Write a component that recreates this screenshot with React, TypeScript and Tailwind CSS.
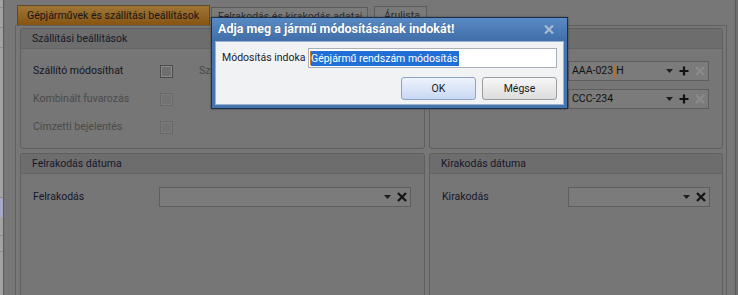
import React from 'react'

const font = "font-['Roboto','Liberation_Sans',sans-serif]"

function Caret() {
  return (
    <svg width="7" height="4" viewBox="0 0 7 4">
      <path d="M0 0H7L3.5 4Z" fill="#1e1e1e" />
    </svg>
  )
}

function Plus() {
  return (
    <svg width="10" height="10" viewBox="0 0 10 10">
      <path d="M5 0.5V9.5M0.5 5H9.5" stroke="#111" strokeWidth="2.2" />
    </svg>
  )
}

function Cross({ color = '#151515' }: { color?: string }) {
  return (
    <svg width="10" height="10" viewBox="0 0 10 10">
      <path d="M1 1L9 9M9 1L1 9" stroke={color} strokeWidth="2.3" />
    </svg>
  )
}

function Checkbox({ enabled }: { enabled?: boolean }) {
  return (
    <div
      className={
        'w-[13px] h-[13px] shrink-0 border ' +
        (enabled ? 'border-[#4a4a4a] bg-[#6f6f6f]' : 'border-[#686868] bg-[#737373]')
      }
    >
      <div className={'w-full h-full border ' + (enabled ? 'border-[#8a8a8a]' : 'border-[#7c7c7c]')} />
    </div>
  )
}

function Panel({ title, children, className = '' }: { title: string; children?: React.ReactNode; className?: string }) {
  return (
    <div className={'rounded-[3px] border border-[#5f5f5f] bg-[#767676] flex flex-col ' + className}>
      <div className="h-[20px] shrink-0 bg-[#6d6d6d] border-b border-[#646464] rounded-t-[3px] pl-[11px] flex items-center text-[10.5px] text-[#16172a]">
        {title}
      </div>
      {children}
    </div>
  )
}

function Field({ children, width, plus, crossColor }: { children?: React.ReactNode; width: string; plus?: boolean; crossColor?: string }) {
  return (
    <div className={'h-[20px] shrink-0 border border-[#5e5e5e] bg-[#7b7b7b] flex items-center pl-[3px] pr-[3px] ' + width}>
      <div className="flex-1 text-[10.5px] text-[#111111] flex items-center">{children}</div>
      <div className="flex items-center gap-[6px]">
        <Caret />
        {plus && <Plus />}
        <Cross color={crossColor} />
      </div>
    </div>
  )
}

export default function App() {
  return (
    <div className={'relative w-[738px] h-[295px] overflow-hidden bg-[#777777] flex whitespace-nowrap text-[10.5px] ' + font}>
      {/* page behind the window */}
      <div className="w-[4px] h-full bg-[#a3a3a3] border-r border-[#595959] flex flex-col">
        <div className="h-[8px] border-b border-[#8d8d8d]" />
        <div className="h-[20px] border-b border-[#8d8d8d]" />
        <div className="h-[20px] border-b border-[#8d8d8d]" />
        <div className="h-[150px] border-b border-[#8d8d8d]" />
        <div className="h-[19px] bg-[#a6a8c8]" />
        <div className="h-[19px] border-b border-[#8d8d8d]" />
        <div className="h-[16px] border-b border-[#8d8d8d]" />
      </div>
      <div className="w-[11px]" />

      {/* window */}
      <div className="w-[712px] flex flex-col">
        <div className="h-[25px] flex items-end pl-[2px] text-[10.5px]">
          <div className="w-[193px] h-[20px] border border-b-0 border-[#5a4a30] bg-gradient-to-b from-[#9e7636] to-[#87540f] pl-[9px] flex items-center text-[#161616] overflow-hidden">
            Gépjárművek és szállítási beállítások
          </div>
          <div className="ml-[1px] w-[157px] h-[18px] border border-b-0 border-[#5b5b5b] bg-[#7a7a7a] pl-[6px] flex items-center text-[#2a2a2a] overflow-hidden">
            Felrakodás és kirakodás adatai
          </div>
          <div className="ml-[6px] w-[53px] h-[19px] border border-b-0 border-[#5b5b5b] bg-[#7a7a7a] pl-[9px] flex items-center text-[#2a2a2a] overflow-hidden">
            Árulista
          </div>
        </div>

        <div className="flex-1 border border-b-0 border-[#616161] pt-[2px] pl-[4px] pr-[3px] grid grid-cols-[405px_294px] grid-rows-[121px_1fr] gap-[4px]">
          <Panel title="Szállítási beállítások">
            <div className="pt-[8px] pl-[12px] flex flex-col text-[10.5px]">
              <div className="h-[28px] flex items-center">
                <span className="w-[127px] text-[#141522]">Szállító módosíthat</span>
                <Checkbox enabled />
                <span className="ml-[26px] text-[#474747]">Szállítás</span>
              </div>
              <div className="h-[28px] flex items-center">
                <span className="w-[127px] text-[#4a4a4a]">Kombinált fuvarozás</span>
                <Checkbox />
              </div>
              <div className="h-[28px] flex items-center">
                <span className="w-[127px] text-[#4a4a4a]">Címzetti bejelentés</span>
                <Checkbox />
              </div>
            </div>
          </Panel>

          <Panel title="Jármű adatok">
            <div className="pt-[12px] pl-[12px] pr-[13px] flex flex-col gap-[8px]">
              <div className="flex items-center justify-between text-[10.5px] text-[#141522]">
                <span>Vontató</span>
                <Field width="w-[141px]" plus crossColor="#8b8b8b">
                  AAA-023<span className="inline-block w-[1px] h-[13px] bg-[#c0701a] mx-[1px]" />H
                </Field>
              </div>
              <div className="flex items-center justify-between text-[10.5px] text-[#141522]">
                <span>Pótkocsi</span>
                <Field width="w-[141px]" plus crossColor="#8b8b8b">
                  CCC-234
                </Field>
              </div>
            </div>
          </Panel>

          <Panel title="Felrakodás dátuma" className="rounded-b-none border-b-0">
            <div className="pt-[13px] pl-[12px] flex items-center text-[10.5px] text-[#16172a]">
              <span className="w-[126px]">Felrakodás</span>
              <Field width="w-[252px]" />
            </div>
          </Panel>

          <Panel title="Kirakodás dátuma" className="rounded-b-none border-b-0">
            <div className="pt-[13px] pl-[12px] flex items-center text-[10.5px] text-[#16172a]">
              <span className="w-[126px]">Kirakodás</span>
              <Field width="w-[142px]" />
            </div>
          </Panel>
        </div>
      </div>

      <div className="w-[8px]" />
      <div className="w-[1px] h-full bg-[#5a5a5a]" />
      <div className="flex-1 bg-[#6e6e6e]" />

      {/* modal dialog */}
      <div className="absolute left-[211px] top-[17px] w-[357px] h-[92px] border border-[#1b2f4b] bg-[#4674ae] flex flex-col shadow-[0_0_2px_rgba(0,0,0,0.4)]">
        <div className="h-[23px] shrink-0 bg-gradient-to-b from-[#5a8ac4] to-[#3f6ea9] flex items-center justify-between pl-[6px] pr-[13px]">
          <span className="text-[12.5px] font-bold text-white [text-shadow:0_0_1px_rgba(0,0,0,0.35)]">
            Adja meg a jármű módosításának indokát!
          </span>
          <svg width="10" height="9" viewBox="0 0 10 9">
            <path d="M1 0.5L9 8.5M9 0.5L1 8.5" stroke="#a6bad3" strokeWidth="2.2" />
          </svg>
        </div>
        <div className="flex-1 mx-[3px] mb-[3px] bg-[#f1f2f4] border border-[#9db2cc] flex flex-col pl-[6px] pr-[6px] pt-[6px]">
          <div className="flex items-center">
            <span className="w-[86px] text-[10.5px] text-[#1c1c2e]">Módosítás indoka</span>
            <div className="flex-1 h-[20px] bg-white border border-[#a9b0ba] flex items-center pl-[1px]">
              <span className="w-[1px] h-[14px] bg-[#d8781a]" />
              <span className="bg-[#1f6fd6] text-white text-[10.5px] leading-[15px] pr-[1px]">Gépjármű rendszám módosítás</span>
            </div>
          </div>
          <div className="mt-[9px] flex justify-end gap-[6px] text-[10.5px] text-[#1a1a1a]">
            <button className="w-[75px] h-[23px] rounded-[3px] border border-[#8ea3c5] bg-gradient-to-b from-[#eef3fc] to-[#c8d8f2] flex items-center justify-center">
              OK
            </button>
            <button className="w-[75px] h-[23px] rounded-[3px] border border-[#9c9c9c] bg-gradient-to-b from-[#f7f7f7] to-[#dcdcdc] flex items-center justify-center">
              Mégse
            </button>
          </div>
        </div>
      </div>
    </div>
  )
}
